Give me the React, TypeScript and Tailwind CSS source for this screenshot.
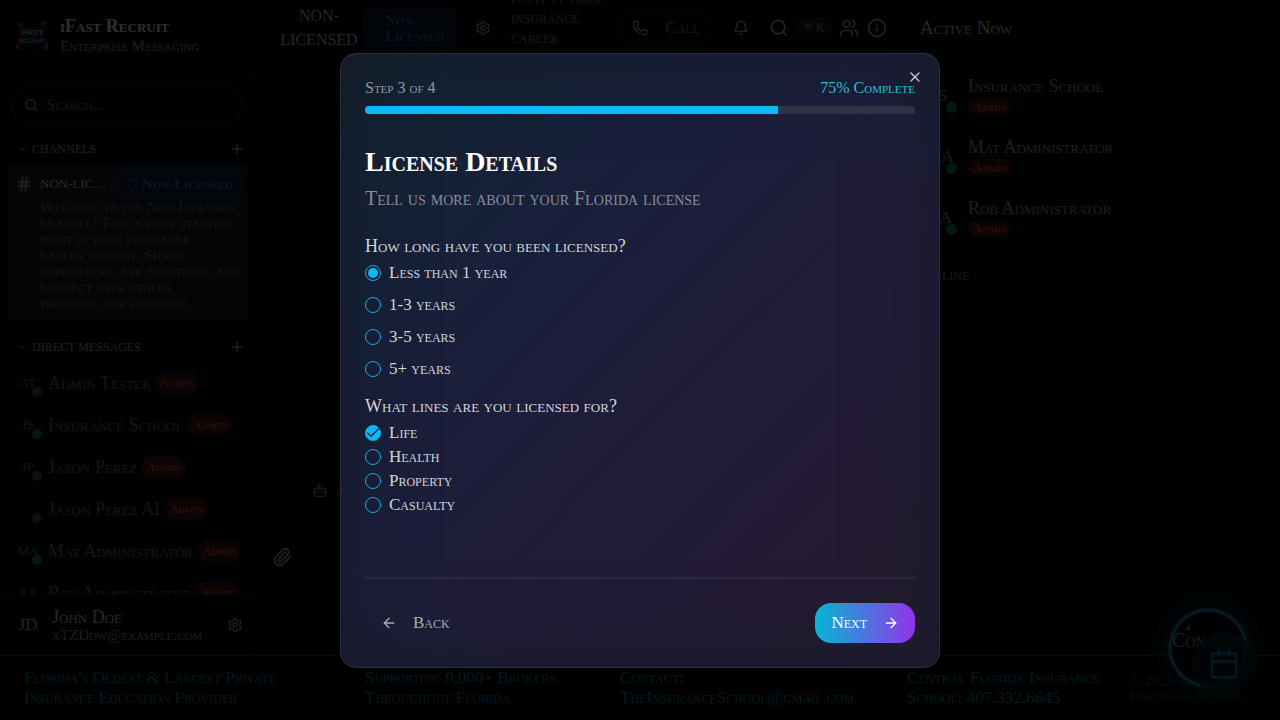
import { useState, type ReactNode } from "react";
import {
  ArrowLeft,
  ArrowRight,
  Bell,
  Bot,
  Calendar,
  Check,
  ChevronDown,
  Hash,
  Info,
  Paperclip,
  Phone,
  Plus,
  Search,
  Settings,
  Shield,
  Users,
  X,
} from "lucide-react";

type Member = { initials: string; name: string; online: boolean };

const directMessages: Member[] = [
  { initials: "AT", name: "Admin Tester", online: false },
  { initials: "IS", name: "Insurance School", online: true },
  { initials: "JP", name: "Jason Perez", online: false },
  { initials: "", name: "Jason Perez AI", online: false },
  { initials: "MA", name: "Mat Administrator", online: true },
  { initials: "RA", name: "Rob Administrator", online: true },
];

const activeMembers: Member[] = [
  { initials: "IS", name: "Insurance School", online: true },
  { initials: "MA", name: "Mat Administrator", online: true },
  { initials: "RA", name: "Rob Administrator", online: true },
];

const durations = ["Less than 1 year", "1-3 years", "3-5 years", "5+ years"];
const licenseLines = ["Life", "Health", "Property", "Casualty"];

function AdminBadge({ className }: { className: string }) {
  return (
    <span className={`shrink-0 rounded-full bg-[#3c0f12] px-[5px] text-[13px] font-bold text-[#c2444a] ${className}`}>
      Admin
    </span>
  );
}

function Logo() {
  return (
    <svg viewBox="0 0 32 32" className="size-8 shrink-0 rounded" aria-hidden="true">
      <rect width="32" height="32" fill="#08090b" />
      <path d="M0 0 L6 4 L4 8 Z M24 0 L31 3 L27 7 Z M27 27 L32 20 L32 32 Z M0 22 L4 27 L0 31 Z" fill="#8a3a10" />
      <path d="M2 5 L9 2 M22 29 L31 25 M3 28 L9 31" stroke="#7a3c14" strokeWidth="1" />
      <rect x="3" y="6" width="26" height="18" rx="3" fill="#0b1f28" />
      <text x="16" y="15" textAnchor="middle" fontFamily="Liberation Sans" fontWeight="700" fontSize="8" fill="#7fb4c4">iFAST</text>
      <text x="16" y="23" textAnchor="middle" fontFamily="Liberation Sans" fontWeight="700" fontSize="6" fill="#4d93aa">RECRUIT</text>
    </svg>
  );
}

function SectionTitle({ children, addLabel }: { children: ReactNode; addLabel: string }) {
  return (
    <div className="flex h-8 items-center justify-between pr-[10px] pl-4">
      <h2 className="flex items-center gap-1 text-[12px] text-[#a0a0a0]">
        <ChevronDown className="size-3" />
        {children}
      </h2>
      <button aria-label={addLabel} className="text-[#a0a0a0]">
        <Plus className="size-4" />
      </button>
    </div>
  );
}

function Sidebar() {
  return (
    <aside className="flex w-64 shrink-0 flex-col border-r border-[#10161d] bg-[#04070b]">
      <div className="flex h-[73px] shrink-0 items-center gap-3 border-b border-[#10161d] px-4">
        <Logo />
        <div>
          <h1 className="text-[18px] leading-5 font-bold text-[#e0e0e0]">iFast Recruit</h1>
          <p className="text-[15px] leading-5 text-[#8a8a8a]">Enterprise Messaging</p>
        </div>
      </div>
      <div className="p-3 pb-2">
        <label className="flex h-10 items-center gap-2 rounded-[20px] border border-[#20262e] px-[11px] text-[#a0a0a0]">
          <Search className="size-4" />
          <input
            aria-label="Search"
            placeholder="Search..."
            className="w-full bg-transparent text-[16px] outline-none placeholder:text-[#686868] [font-variant-caps:small-caps]"
          />
        </label>
      </div>
      <SectionTitle addLabel="Add channel">CHANNELS</SectionTitle>
      <section className="mr-2 ml-2 rounded-l bg-[#171a1f] pt-2 pb-2 pl-2">
        <div className="flex items-center gap-2 pr-[5px]">
          <Hash className="size-4 shrink-0 text-[#b8b8b8]" />
          <a href="#non-licensed" className="min-w-0 flex-1 truncate text-[13px] leading-5 text-[#c8c8c8]">
            NON-LICENSED
          </a>
          <span className="flex h-[22px] items-center gap-1 rounded border border-[#12386c] bg-[#0c1c38] px-2 text-[15px] font-bold text-[#2f6aa8]">
            <Shield className="size-3" />
            Non-Licensed
          </span>
        </div>
        <p className="mt-1 pl-6 text-[15px] leading-4 text-[#666666]">
          Welcome to the Non-Licensed
          <br />
          channel! This is your starting
          <br />
          point in your insurance
          <br />
          career journey. Share
          <br />
          experiences, ask questions, and
          <br />
          connect with others
          <br />
          preparing for licensing.
        </p>
      </section>
      <div className="mt-3">
        <SectionTitle addLabel="New message">DIRECT MESSAGES</SectionTitle>
      </div>
      <ul className="min-h-0 flex-1 overflow-hidden">
        {directMessages.map((m) => (
          <li key={m.name} className="flex h-[42px] items-center gap-2 pb-[2px] pl-4 text-[#6c6c6c]">
            <span className="relative flex size-6 shrink-0 items-center justify-center text-[13px]">
              {m.initials}
              <span className={`absolute -right-[2px] -bottom-[2px] size-[10px] rounded-full ${m.online ? "bg-[#147c38]" : "bg-[#4c4d54]"}`} />
            </span>
            <span className="flex min-w-0 items-center gap-1 text-[18px] whitespace-nowrap">
              {m.name}
              <AdminBadge className="leading-[22px]" />
            </span>
          </li>
        ))}
      </ul>
      <div className="flex h-[61px] shrink-0 items-center gap-3 border-t border-[#192027] px-3">
        <span className="w-7 shrink-0 pl-1 text-center text-[17px] text-[#a8a8a8]">JD</span>
        <div className="min-w-0 flex-1">
          <p className="text-[18px] leading-5 text-[#c0c0c0]">John Doe</p>
          <p className="text-[15px] leading-4 text-[#8a8a8a]">xTZDdw@example.com</p>
        </div>
        <button aria-label="Settings" className="text-[#a0a0a0]">
          <Settings className="size-4" />
        </button>
      </div>
    </aside>
  );
}

function ChannelHeader() {
  return (
    <header className="flex h-14 shrink-0 items-center pl-[23px] text-[#a8a8a8]">
      <h2 className="w-20 text-center text-[16px] leading-6 font-medium text-[#b8b8b8]">NON-LICENSED</h2>
      <span className="ml-[5px] flex h-[38px] w-[91px] shrink-0 items-center gap-1 rounded border border-[#12305c] bg-[#08142a] px-2 text-[15px] leading-4 font-bold text-[#2b6098]">
        <Shield className="size-2 shrink-0" />
        <span>
          Non-
          <br />
          Licensed
        </span>
      </span>
      <button aria-label="Channel settings" className="ml-5 shrink-0">
        <Settings className="size-4" />
      </button>
      <p className="ml-5 h-14 w-[104px] shrink-0 overflow-hidden text-[17px] leading-5 whitespace-nowrap text-[#767676]">
        <span className="-mt-3 block">
          point in your
          <br />
          insurance
          <br />
          career
        </span>
      </p>
      <button className="ml-1 flex h-9 w-[94px] shrink-0 items-center justify-between rounded-[18px] border border-[#1c2128] px-3 text-[17px] text-[#767676]">
        <Phone className="size-4 text-[#a8a8a8]" />
        Call
      </button>
      <button aria-label="Notifications" className="ml-5 shrink-0">
        <Bell className="size-4" />
      </button>
      <button className="ml-5 flex shrink-0 items-center gap-2" aria-label="Search messages">
        <Search className="size-5" />
        <kbd className="flex h-5 w-[34px] items-center justify-center gap-[3px] rounded bg-[#13181e] font-['Liberation_Sans','DejaVu_Sans',sans-serif] text-[12px] text-[#808080]">
          <span className="text-[9px]">⌘</span>
          <span>K</span>
        </kbd>
      </button>
      <button aria-label="Members" className="ml-2 shrink-0">
        <Users className="size-5" />
      </button>
      <button aria-label="Channel details" className="ml-2 shrink-0">
        <Info className="size-5" />
      </button>
    </header>
  );
}

function ActivePanel() {
  return (
    <aside className="w-[377px] shrink-0 border-l border-[#10161d] bg-[#04070b]">
      <h2 className="flex h-14 items-center px-4 text-[19px] text-[#c4c4c4]">Active Now</h2>
      <ul className="px-4 pt-[18px]">
        {activeMembers.map((m) => (
          <li key={m.name} className="flex h-[61px] gap-2">
            <span className="relative mt-[2px] flex size-10 items-center justify-center text-[17px] text-[#909090]">
              {m.initials}
              <span className="absolute right-[3px] bottom-[3px] size-[11px] rounded-full bg-[#147c38]" />
            </span>
            <span>
              <span className="block text-[18px] leading-6 text-[#959595]">{m.name}</span>
              <AdminBadge className="block w-fit leading-[17px]" />
            </span>
          </li>
        ))}
      </ul>
      <h3 className="px-4 pt-[9px] text-[12px] leading-5 text-[#808080]">OFFLINE</h3>
    </aside>
  );
}

function Footer() {
  return (
    <footer className="grid shrink-0 grid-cols-[341fr_255fr_287fr_222fr_127fr] items-center border-t border-[#0f4352] bg-black px-6 py-3 text-[17px] leading-5 whitespace-nowrap text-[#0d8299]">
      <p>
        Florida's Oldest &amp; Largest Private
        <br />
        Insurance Education Provider
      </p>
      <p>
        Supporting 9,000+ Brokers
        <br />
        Throughout Florida
      </p>
      <p>
        Contact:
        <br />
        TheInsuranceSchool@gmail.com
      </p>
      <p>
        Central Florida Insurance
        <br />
        School: 407.332.6645
      </p>
      <p className="text-[15px] leading-4 text-[#1f4d58]">
        © 2025 The
        <br />
        Insurance School
      </p>
    </footer>
  );
}

function ConsultWidget() {
  return (
    <div className="absolute right-8 bottom-8 size-20 rounded-full border-4 border-[#107e94] bg-[#05090c]/80 shadow-[0_0_24px_#073a46]">
      <svg viewBox="0 0 6 6" className="absolute top-3 left-3 size-[6px]" aria-hidden="true">
        <path d="M6 0 V6 H0 Z" fill="#68745a" />
      </svg>
      <span className="absolute top-4 left-0 text-[20px] leading-6 text-[#909090]">Consult</span>
      <button
        aria-label="Book a consultation"
        className="absolute top-5 left-5 flex size-16 items-center justify-center rounded-full border border-[#0a3843] bg-[#041b24]/80 text-[#0e8298]"
      >
        <Calendar className="size-8" />
      </button>
    </div>
  );
}

function LicenseDialog() {
  const [duration, setDuration] = useState(durations[0]);
  const [lines, setLines] = useState<string[]>(["Life"]);

  const toggleLine = (line: string) =>
    setLines((cur) => (cur.includes(line) ? cur.filter((l) => l !== line) : [...cur, line]));

  return (
    <div
      role="dialog"
      aria-modal="true"
      aria-labelledby="dialog-title"
      className="relative w-full max-w-[600px] rounded-2xl border border-[#2b3140] bg-[linear-gradient(135deg,#11242f_0%,#18203a_28%,#1e1d3a_50%,#231b37_72%,#261b2b_100%)] p-6 text-[#d4d5da] shadow-[inset_0_0_80px_8px_#161b2b]"
    >
      <button aria-label="Close" className="absolute top-[15px] right-4 text-[#c3c6cc]">
        <X className="size-4" />
      </button>
      <div className="flex justify-between text-[16px] leading-5">
        <span className="text-[#8e96a2]">Step 3 of 4</span>
        <span className="text-[#27bfdc]">75% Complete</span>
      </div>
      <div
        role="progressbar"
        aria-label="Progress"
        aria-valuenow={75}
        aria-valuemin={0}
        aria-valuemax={100}
        className="mt-2 h-2 overflow-hidden rounded bg-[#323247]"
      >
        <div className="h-full w-3/4 bg-[#0bb9f8]" />
      </div>
      <h2 id="dialog-title" className="mt-8 text-[28px] leading-8 font-bold text-white">
        License Details
      </h2>
      <p className="mt-2 text-[20px] leading-6 text-[#878b9a]">Tell us more about your Florida license</p>
      <form onSubmit={(e) => e.preventDefault()}>
        <fieldset className="mt-[26px]">
          <legend className="text-[18px] leading-5">How long have you been licensed?</legend>
          <div className="mt-[7px] flex flex-col gap-3">
            {durations.map((d) => (
              <label key={d} className="flex h-5 items-center gap-2 text-[17px] leading-5">
                <input
                  type="radio"
                  name="duration"
                  checked={duration === d}
                  onChange={() => setDuration(d)}
                  className="flex size-4 appearance-none items-center justify-center rounded-full border border-[#0bb0ec] before:size-[10px] before:rounded-full checked:before:bg-[#0bb9f8]"
                />
                {d}
              </label>
            ))}
          </div>
        </fieldset>
        <fieldset className="mt-[17px]">
          <legend className="text-[18px] leading-5">What lines are you licensed for?</legend>
          <div className="mt-[7px] flex flex-col gap-1">
            {licenseLines.map((l) => (
              <label key={l} className="flex h-5 items-center gap-2 text-[17px] leading-5">
                <span className="relative flex size-4">
                  <input
                    type="checkbox"
                    checked={lines.includes(l)}
                    onChange={() => toggleLine(l)}
                    className="size-4 appearance-none rounded-full border border-[#0bb0ec] checked:bg-[#0bb9f8]"
                  />
                  {lines.includes(l) && (
                    <Check className="pointer-events-none absolute inset-0 size-4 text-[#15202e]" strokeWidth={2} />
                  )}
                </span>
                {l}
              </label>
            ))}
          </div>
        </fieldset>
        <div className="mt-[62px] flex items-center justify-between border-t-2 border-[#2a2740] pt-6">
          <button type="button" className="flex h-10 items-center gap-4 px-4 text-[17px] text-[#a9abb5]">
            <ArrowLeft className="size-4" />
            Back
          </button>
          <button
            type="submit"
            className="flex h-10 items-center gap-4 rounded-2xl bg-[linear-gradient(90deg,#06b6d4,#9333ea)] px-4 text-[17px] text-white"
          >
            Next
            <ArrowRight className="size-4" />
          </button>
        </div>
      </form>
    </div>
  );
}

export default function App() {
  return (
    <div className="relative flex h-screen flex-col overflow-hidden bg-[#04070b] font-['Liberation_Serif',serif] [font-variant-caps:small-caps]">
      <div className="flex min-h-0 flex-1">
        <Sidebar />
        <main className="flex min-w-0 flex-1 flex-col overflow-hidden bg-[#05080c]">
          <ChannelHeader />
          <div className="flex flex-1 flex-col justify-end gap-12 pb-[88px] pl-4 text-[#a8a8a8]">
            <p className="flex h-4 items-center gap-2 pl-10 text-[14px] text-[#888888]">
              <Bot className="size-4" />
              AI Assistant
            </p>
            <button aria-label="Attach file" className="w-fit">
              <Paperclip className="size-5" />
            </button>
          </div>
        </main>
        <ActivePanel />
      </div>
      <Footer />
      <ConsultWidget />
      <div className="absolute inset-0 flex items-center justify-center bg-black/80">
        <LicenseDialog />
      </div>
    </div>
  );
}
